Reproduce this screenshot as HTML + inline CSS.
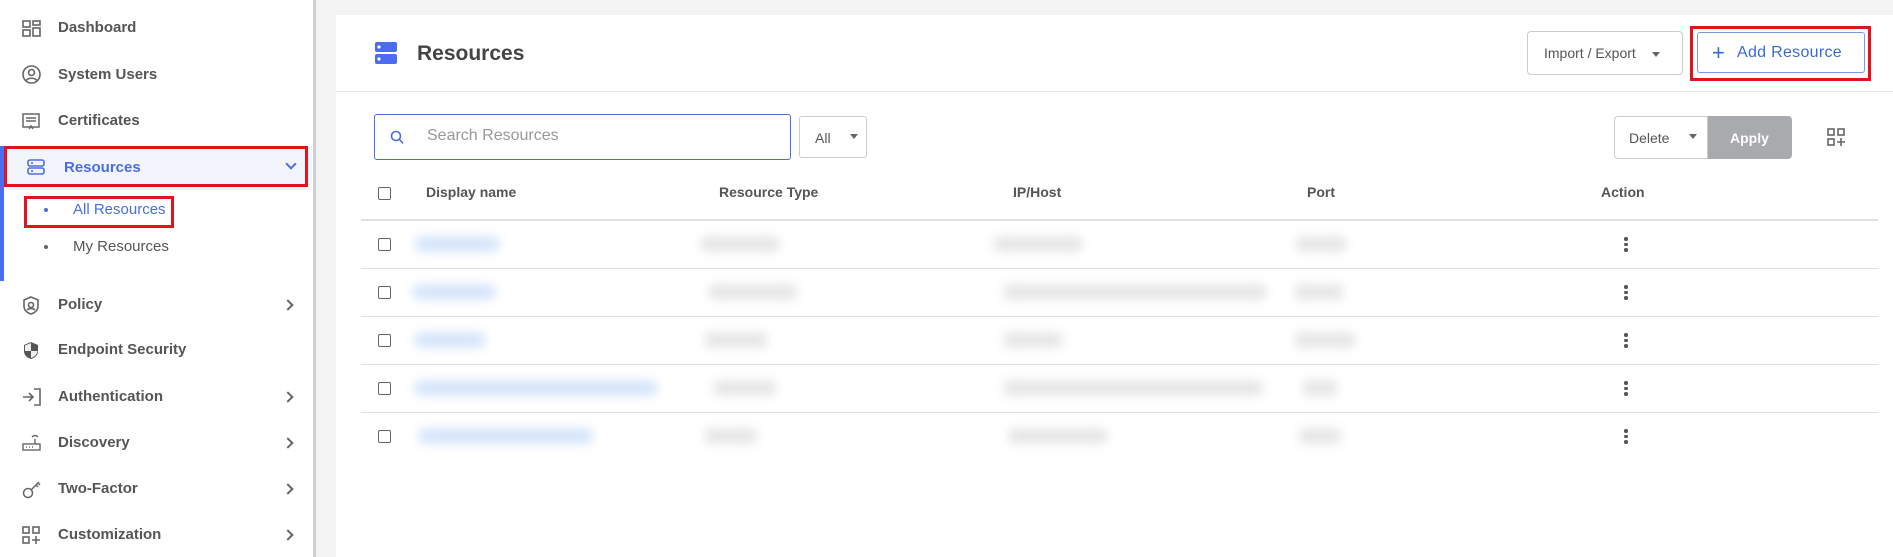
<!DOCTYPE html>
<html><head><meta charset="utf-8"><style>
*{margin:0;padding:0;box-sizing:border-box}
body{width:1893px;height:557px;overflow:hidden;background:#f3f3f3;font-family:"Liberation Sans",sans-serif;position:relative}
.a{position:absolute}
#side{left:0;top:0;width:316px;height:557px;background:#fff;border-right:3px solid #cfcfcf}
.it{position:absolute;left:58px;font-size:15px;font-weight:bold;color:#555;line-height:18px}
.ic{position:absolute;left:22px}
.chev{position:absolute;left:284px;width:8px;height:8px;border-right:2px solid #666;border-top:2px solid #666;transform:rotate(45deg)}
#card{left:336px;top:15px;width:1557px;height:542px;background:#fff}
.th{position:absolute;top:184px;font-size:14px;font-weight:bold;color:#555}
.cb{position:absolute;left:378px;width:13px;height:13px;border:1.5px solid #666;border-radius:2px}
.hl{position:absolute;left:361px;width:1517px;height:1px;background:#e0e0e0}
.bl{position:absolute;height:16px;border-radius:8px;filter:blur(5px)}
.n{background:#d6e5fb}.g{background:#e6e6e6}
.keb{position:absolute;left:1624px;width:4px}
.keb i{display:block;width:3.5px;height:3.5px;border-radius:50%;background:#555;margin-bottom:2px}
</style></head><body>
<div id="side" class="a"></div>
<!-- sidebar -->
<svg class="ic" style="top:20px" width="19" height="17" viewBox="0 0 19 17" fill="none" stroke="#666" stroke-width="1.6"><rect x="1" y="1" width="7" height="6"/><rect x="11" y="1" width="7" height="4"/><rect x="1" y="10" width="7" height="6"/><rect x="11" y="8" width="7" height="8"/></svg>
<div class="it" style="top:19px">Dashboard</div>
<svg class="ic" style="top:65px" width="19" height="19" viewBox="0 0 19 19" fill="none" stroke="#666" stroke-width="1.6"><circle cx="9.5" cy="9.5" r="8.5"/><circle cx="9.5" cy="7.5" r="3"/><path d="M4 15.5c2-3 9-3 11 0"/></svg>
<div class="it" style="top:66px">System Users</div>
<svg class="ic" style="top:113px" width="18" height="17" viewBox="0 0 18 17" fill="none" stroke="#666" stroke-width="1.5"><rect x="1" y="1" width="16" height="13"/><path d="M4 5h10M4 8h10M7 16l2-3 2 3"/></svg>
<div class="it" style="top:112px">Certificates</div>
<div class="a" style="left:4px;top:146px;width:308px;height:44px;background:#f3f5fc"></div>
<div class="a" style="left:0;top:146px;width:4px;height:135px;background:#4a6cf0"></div>
<div class="a" style="left:4px;top:146px;width:304px;height:41px;border:3px solid #e0141c"></div>
<svg class="a" style="left:27px;top:159px" width="18" height="16" viewBox="0 0 18 16" fill="none" stroke="#4a6ee0" stroke-width="1.6"><rect x="1" y="1" width="16" height="6" rx="2"/><rect x="1" y="9" width="16" height="6" rx="2"/><path d="M5 3v2M5 11v2"/></svg>
<div class="it" style="left:64px;top:159px;color:#4a6ee0">Resources</div>
<div class="a" style="left:287px;top:160px;width:8px;height:8px;border-right:2px solid #4a6ee0;border-bottom:2px solid #4a6ee0;transform:rotate(45deg)"></div>
<div class="a" style="left:24px;top:196px;width:150px;height:32px;border:3px solid #e0141c"></div>
<div class="a" style="left:44px;top:208px;width:4px;height:4px;border-radius:50%;background:#4a6ee0"></div>
<div class="it" style="left:73px;top:201px;color:#4a6ee0;font-weight:normal">All Resources</div>
<div class="a" style="left:44px;top:245px;width:4px;height:4px;border-radius:50%;background:#666"></div>
<div class="it" style="left:73px;top:238px;font-weight:normal">My Resources</div>
<svg class="ic" style="top:296px" width="18" height="19" viewBox="0 0 18 19" fill="none" stroke="#666" stroke-width="1.6"><path d="M9 1l7 3v6c0 4-3 7-7 8-4-1-7-4-7-8V4z"/><circle cx="9" cy="9" r="2.5"/><path d="M5 14c2-2 6-2 8 0"/></svg>
<div class="it" style="top:296px">Policy</div><div class="chev" style="top:301px"></div>
<svg class="ic" style="top:341px" width="18" height="19" viewBox="0 0 18 19"><path d="M9 1l7 3v6c0 4-3 7-7 8-4-1-7-4-7-8V4z" fill="#555"/><path d="M9 2L3 4.5V10h6zM9 10h6.5c-.5 3.5-3 6-6.5 7z" fill="#fff" opacity=".9"/></svg>
<div class="it" style="top:341px">Endpoint Security</div>
<svg class="ic" style="top:388px" width="19" height="18" viewBox="0 0 19 18" fill="none" stroke="#666" stroke-width="1.6"><path d="M1 9h10M7 5l4 4-4 4M12 1h6v16h-6"/></svg>
<div class="it" style="top:388px">Authentication</div><div class="chev" style="top:393px"></div>
<svg class="ic" style="top:434px" width="19" height="18" viewBox="0 0 19 18" fill="none" stroke="#666" stroke-width="1.4"><rect x="1" y="10" width="17" height="6"/><path d="M13 10V5M10 3c2-2 4-2 6 0M4 13h1M7 13h1M10 13h1"/></svg>
<div class="it" style="top:434px">Discovery</div><div class="chev" style="top:439px"></div>
<svg class="ic" style="top:480px" width="20" height="19" viewBox="0 0 20 19" fill="none" stroke="#666" stroke-width="1.5"><circle cx="6" cy="13" r="4.5"/><path d="M9 10l8-8M14 5l2 2M16 3l2 2"/></svg>
<div class="it" style="top:480px">Two-Factor</div><div class="chev" style="top:485px"></div>
<svg class="ic" style="top:526px" width="18" height="18" viewBox="0 0 18 18" fill="none" stroke="#666" stroke-width="1.6"><rect x="1" y="1" width="6" height="6"/><rect x="11" y="1" width="6" height="6"/><rect x="1" y="11" width="6" height="6"/><path d="M14 10v8M10 14h8"/></svg>
<div class="it" style="top:526px">Customization</div><div class="chev" style="top:531px"></div>

<!-- main -->
<div id="card" class="a"></div>
<svg class="a" style="left:375px;top:42px" width="22" height="22" viewBox="0 0 22 22"><rect x="0" y="0" width="22" height="10" rx="2" fill="#4a6cf0"/><rect x="0" y="12" width="22" height="10" rx="2" fill="#4a6cf0"/><circle cx="4" cy="5" r="1.6" fill="#fff"/><circle cx="4" cy="17" r="1.6" fill="#fff"/></svg>
<div class="a" style="left:417px;top:42px;font-size:21px;color:#444;font-weight:bold">Resources</div>
<div class="a" style="left:336px;top:91px;width:1557px;height:1px;background:#e6e6e6"></div>
<div class="a" style="left:1527px;top:31px;width:156px;height:44px;border:1px solid #ccc;border-radius:4px"></div>
<div class="a" style="left:1544px;top:45px;font-size:14px;color:#555">Import / Export</div>
<div class="a" style="left:1652px;top:52px;border:4px solid transparent;border-top:5px solid #666"></div>
<div class="a" style="left:1690px;top:26px;width:181px;height:55px;border:3px solid #e0141c"></div>
<div class="a" style="left:1697px;top:32px;width:168px;height:41px;border:1px solid #7a9be0;border-radius:3px"></div>
<div class="a" style="left:1712px;top:44px;font-size:22px;line-height:18px;color:#3a6ad8">+</div>
<div class="a" style="left:1737px;top:44px;font-size:16px;color:#3a6ad8;letter-spacing:.3px">Add Resource</div>

<div class="a" style="left:374px;top:114px;width:417px;height:46px;border:1.5px solid #4a6ee0;border-radius:3px"></div>
<svg class="a" style="left:390px;top:130px" width="14" height="15" viewBox="0 0 14 15" fill="none" stroke="#4a6ee0" stroke-width="1.6"><circle cx="6" cy="6" r="4.5"/><path d="M9.5 9.5l3.5 4"/></svg>
<div class="a" style="left:427px;top:127px;font-size:16px;color:#999">Search Resources</div>
<div class="a" style="left:799px;top:116px;width:68px;height:42px;border:1px solid #ccc;border-radius:3px"></div>
<div class="a" style="left:815px;top:130px;font-size:14px;color:#555">All</div>
<div class="a" style="left:850px;top:134px;border:4px solid transparent;border-top:5px solid #666"></div>
<div class="a" style="left:1614px;top:116px;width:94px;height:43px;border:1px solid #ccc;border-radius:4px 0 0 4px"></div>
<div class="a" style="left:1629px;top:130px;font-size:14px;color:#555">Delete</div>
<div class="a" style="left:1689px;top:134px;border:4px solid transparent;border-top:5px solid #666"></div>
<div class="a" style="left:1708px;top:116px;width:84px;height:43px;background:#a8aaae;border-radius:0 4px 4px 0"></div>
<div class="a" style="left:1730px;top:130px;font-size:14px;color:#fff;font-weight:bold">Apply</div>
<svg class="a" style="left:1827px;top:128px" width="19" height="18" viewBox="0 0 19 18" fill="none" stroke="#666" stroke-width="1.6"><rect x="1" y="1" width="6" height="6"/><rect x="11" y="1" width="6" height="6"/><rect x="1" y="11" width="6" height="6"/><path d="M14 10v8M10 14h8"/></svg>

<div class="cb" style="top:187px"></div>
<div class="th" style="left:426px">Display name</div>
<div class="th" style="left:719px">Resource Type</div>
<div class="th" style="left:1013px">IP/Host</div>
<div class="th" style="left:1307px">Port</div>
<div class="th" style="left:1601px">Action</div>
<div class="hl" style="top:219px;height:2px"></div>

<div class="cb" style="top:238px"></div>
<div class="bl n" style="left:415px;top:236px;width:85px"></div><div class="bl g" style="left:700px;top:236px;width:80px"></div><div class="bl g" style="left:993px;top:236px;width:90px"></div><div class="bl g" style="left:1295px;top:236px;width:52px"></div>
<div class="keb" style="top:237px"><i></i><i></i><i></i></div>
<div class="hl" style="top:268px"></div>

<div class="cb" style="top:286px"></div>
<div class="bl n" style="left:412px;top:284px;width:84px"></div><div class="bl g" style="left:708px;top:284px;width:90px"></div><div class="bl g" style="left:1003px;top:284px;width:264px"></div><div class="bl g" style="left:1294px;top:284px;width:50px"></div>
<div class="keb" style="top:285px"><i></i><i></i><i></i></div>
<div class="hl" style="top:316px"></div>

<div class="cb" style="top:334px"></div>
<div class="bl n" style="left:414px;top:332px;width:72px"></div><div class="bl g" style="left:704px;top:332px;width:64px"></div><div class="bl g" style="left:1003px;top:332px;width:60px"></div><div class="bl g" style="left:1294px;top:332px;width:62px"></div>
<div class="keb" style="top:333px"><i></i><i></i><i></i></div>
<div class="hl" style="top:364px"></div>

<div class="cb" style="top:382px"></div>
<div class="bl n" style="left:414px;top:380px;width:244px"></div><div class="bl g" style="left:713px;top:380px;width:64px"></div><div class="bl g" style="left:1003px;top:380px;width:260px"></div><div class="bl g" style="left:1302px;top:380px;width:36px"></div>
<div class="keb" style="top:381px"><i></i><i></i><i></i></div>
<div class="hl" style="top:412px"></div>

<div class="cb" style="top:430px"></div>
<div class="bl n" style="left:418px;top:428px;width:175px"></div><div class="bl g" style="left:704px;top:428px;width:54px"></div><div class="bl g" style="left:1008px;top:428px;width:100px"></div><div class="bl g" style="left:1298px;top:428px;width:44px"></div>
<div class="keb" style="top:429px"><i></i><i></i><i></i></div>
</body></html>
